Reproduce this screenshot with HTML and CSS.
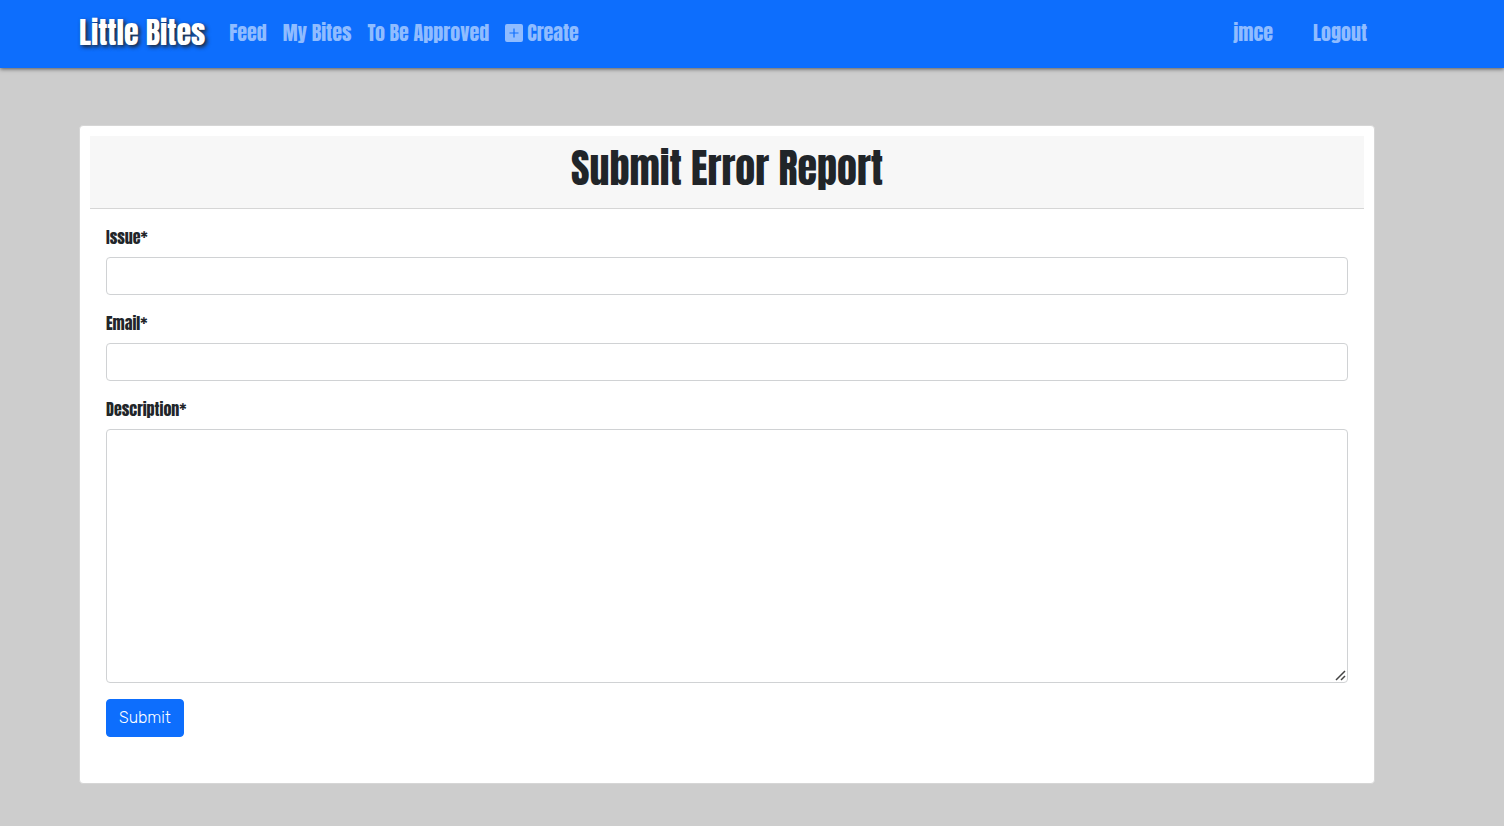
FILE: index.html
```html
<!DOCTYPE html>
<html lang="en">
<head>
<meta charset="utf-8">
<meta name="viewport" content="width=device-width, initial-scale=1">
<title>Little Bites</title>
<link rel="stylesheet" href="styles.css">
</head>
<body>
<header class="navbar">
  <nav class="container nav-row">
    <a class="brand" href="#">Little Bites</a>
    <a class="nav-link" href="#">Feed</a>
    <a class="nav-link" href="#">My Bites</a>
    <a class="nav-link" href="#">To Be Approved</a>
    <a class="nav-link nav-create" href="#"><svg class="icon" viewBox="0 0 18 18" aria-hidden="true"><path fill="currentColor" fill-rule="evenodd" d="M2 0h14a2 2 0 0 1 2 2v14a2 2 0 0 1-2 2H2a2 2 0 0 1-2-2V2a2 2 0 0 1 2-2zM8.400 4.500v3.900H4.500v1.200h3.900v3.900h1.200V9.600h3.900V8.400H9.600V4.500z"/></svg>Create</a>
    <span class="account">
      <a class="nav-link" href="#">jmce</a>
      <a class="nav-link" href="#">Logout</a>
    </span>
  </nav>
</header>
<main class="page">
  <section class="container card">
    <div class="card-header"><h1 class="title">Submit Error Report</h1></div>
    <form class="card-body">
      <div class="field">
        <label class="label" for="issue">Issue*</label>
        <input class="control" id="issue" type="text">
      </div>
      <div class="field">
        <label class="label" for="email">Email*</label>
        <input class="control" id="email" type="email">
      </div>
      <div class="field">
        <label class="label" for="description">Description*</label>
        <div class="area">
          <textarea class="control" id="description" rows="10"></textarea>
          <svg class="grip" viewBox="0 0 12 12" aria-hidden="true"><path d="M1 11L10 2M6 11L10 7" fill="none" stroke="#444" stroke-width="1.500"/></svg>
        </div>
      </div>
      <button class="submit" type="button">Submit</button>
    </form>
  </section>
</main>
</body>
</html>
```
FILE: styles.css
```css
* { box-sizing: border-box; }

body {
  margin: 0;
  background: #cdcdcd;
  color: #212529;
  font-family: Anton, "Liberation Sans Narrow", "Liberation Sans", sans-serif;
  font-size: 16px;
  font-weight: 400;
  line-height: 24px;
}

.container {
  width: 100%;
  max-width: 1296px;
  margin: 0 auto;
}

.navbar {
  background: #0d6efd;
  padding: 9px 50px 11px 0;
  box-shadow: 0 1px 4px #555;
}

.nav-row {
  display: flex;
  align-items: center;
  min-height: 48px;
}

.brand {
  margin-right: 16px;
  color: #fff;
  font-size: 30px;
  line-height: 48px;
  text-decoration: none;
  text-shadow: 2px 2px 4px #222;
  white-space: nowrap;
}

.nav-link {
  padding: 8px;
  color: #8fbcff;
  font-size: 20px;
  line-height: 32px;
  text-decoration: none;
  white-space: nowrap;
}

.nav-create {
  display: flex;
  align-items: center;
  gap: 4px;
}

.icon {
  width: 18px;
  height: 18px;
}

.account {
  display: flex;
  gap: 24px;
  margin-left: auto;
}

.page {
  padding: 57px 50px 42px 0;
}

.card {
  padding: 10px;
  background: #fff;
  border: 1px solid #d6d6d6;
  border-radius: 4px;
}

.card-header {
  padding: 8px 16px 16px;
  background: #f7f7f7;
  border-bottom: 1px solid #d6d6d6;
}

.title {
  margin: 0;
  font-size: 40px;
  font-weight: 400;
  line-height: 48px;
  text-align: center;
}

.card-body {
  padding: 16px 16px 36px;
}

.field {
  margin-bottom: 16px;
}

.label {
  display: block;
  margin-bottom: 8px;
}

.control {
  display: block;
  width: 100%;
  padding: 6px 12px;
  color: #212529;
  font: 300 16px/24px Rubik, Inter, sans-serif;
  background: #fff;
  border: 1px solid #d0d2d4;
  border-radius: 4px;
}

.area {
  position: relative;
}

textarea.control {
  resize: vertical;
}

textarea.control::-webkit-resizer {
  background: transparent;
}

.grip {
  position: absolute;
  right: 1px;
  bottom: 2px;
  width: 12px;
  height: 12px;
  pointer-events: none;
}

.submit {
  display: block;
  padding: 6px 12px;
  color: #fff;
  font: 300 16px/24px Rubik, Inter, sans-serif;
  background: #0d6efd;
  border: 1px solid #0d6efd;
  border-radius: 4px;
}
```
